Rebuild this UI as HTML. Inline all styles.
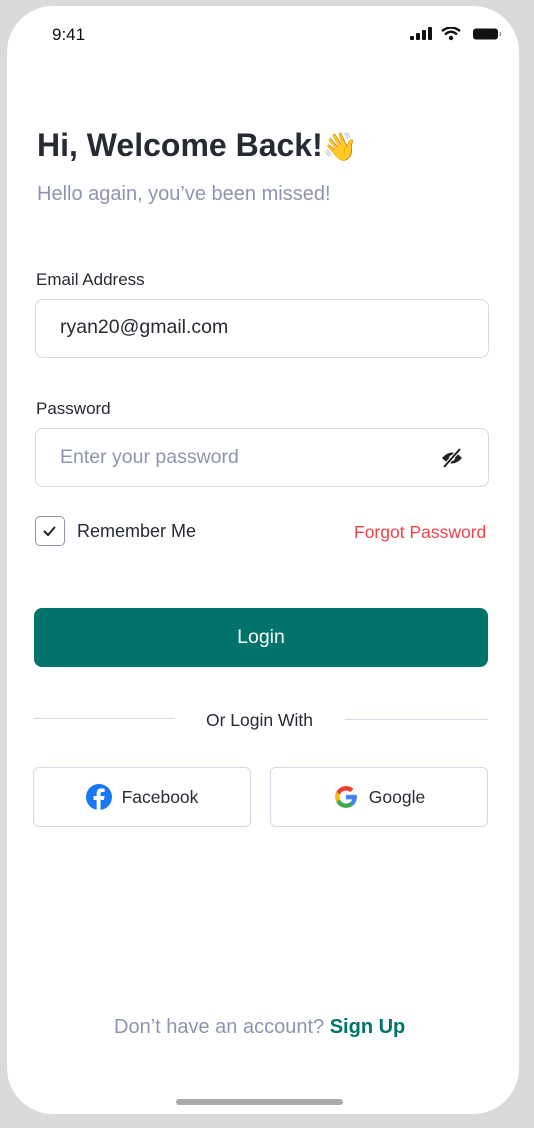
<!DOCTYPE html>
<html><head><meta charset="utf-8"><style>
*{margin:0;padding:0;box-sizing:border-box}
body{width:534px;height:1128px;background:#dadada;font-family:"Liberation Sans",sans-serif;position:relative;overflow:hidden}
.phone{position:absolute;left:7px;top:6px;width:512px;height:1108px;background:#fff;border-radius:46px}
.a{position:absolute}
.input{position:absolute;left:35px;width:454px;height:59px;border:1.5px solid #d6d8e6;border-radius:8px}
.btn{position:absolute;top:767px;height:60px;border:1.5px solid #d6d8e6;border-radius:6px;font-size:17.5px;color:#2a2e35;display:flex;align-items:center;justify-content:center;gap:10px}
</style></head><body>
<div class="phone"></div>
<div class="a" style="left:52px;top:25px;font-size:17px;color:#111">9:41</div>
<svg class="a" style="left:410px;top:27px" width="94" height="15">
<rect x="0" y="9" width="4" height="4" rx="1" fill="#111"/><rect x="6" y="6" width="4" height="7" rx="1" fill="#111"/><rect x="12" y="3" width="4" height="10" rx="1" fill="#111"/><rect x="18" y="0" width="4" height="13" rx="1" fill="#111"/>
<path d="M32 4 Q41 -3 50 4" stroke="#111" stroke-width="2.4" fill="none"/><path d="M35 7.5 Q41 2 47 7.5" stroke="#111" stroke-width="2.4" fill="none"/><circle cx="41" cy="11" r="2.2" fill="#111"/>
<rect x="63" y="1.5" width="25" height="11" rx="3" fill="#111"/><rect x="89.5" y="5" width="1.5" height="4" fill="#999"/>
</svg>
<div class="a" style="left:37px;top:127px;font-size:32px;font-weight:bold;color:#262a33">Hi, Welcome Back!<span style="font-size:28px">👋</span></div>
<div class="a" style="left:37px;top:183px;font-size:20px;color:#8e95ae">Hello again, you’ve been missed!</div>
<div class="a" style="left:36px;top:270px;font-size:17px;color:#262a33">Email Address</div>
<div class="input" style="top:299px"></div>
<div class="a" style="left:60px;top:316px;font-size:19.5px;color:#262a33">ryan20@gmail.com</div>
<div class="a" style="left:36px;top:399px;font-size:17px;color:#262a33">Password</div>
<div class="input" style="top:428px"></div>
<div class="a" style="left:60px;top:446px;font-size:19.5px;color:#8e95ae">Enter your password</div>
<svg class="a" style="left:440px;top:447px" width="24" height="22" viewBox="0 0 24 22"><path d="M2 11 Q12 0 22 11 Q12 22 2 11Z" fill="#222"/><circle cx="12" cy="11" r="3" fill="#fff"/><path d="M4 20 L20 2" stroke="#fff" stroke-width="4"/><path d="M4 20 L20 2" stroke="#222" stroke-width="2"/></svg>
<div class="a" style="left:35px;top:516px;width:30px;height:30px;border:1.5px solid #8e93a8;border-radius:5px"></div>
<svg class="a" style="left:42px;top:524px" width="16" height="14"><path d="M2 7 L6 11 L13 3" stroke="#222" stroke-width="2" fill="none"/></svg>
<div class="a" style="left:77px;top:521px;font-size:18px;color:#262a33">Remember Me</div>
<div class="a" style="left:354px;top:522px;font-size:17.5px;color:#f2424a">Forgot Password</div>
<div class="a" style="left:34px;top:608px;width:454px;height:59px;background:#00736b;border-radius:8px;color:#fff;font-size:19.5px;display:flex;align-items:center;justify-content:center">Login</div>
<div class="a" style="left:34px;top:718px;width:141px;height:1px;background:#d6d8e6"></div>
<div class="a" style="left:345px;top:719px;width:143px;height:1px;background:#d6d8e6"></div>
<div class="a" style="left:206px;top:710px;font-size:17.5px;color:#262a33">Or Login With</div>
<div class="btn" style="left:33px;width:218px"><svg width="26" height="26" viewBox="0 0 26 26"><circle cx="13" cy="13" r="13" fill="#1877f2"/><path d="M14.5 26 V16 H18 L18.5 12 H14.5 V9.8 Q14.5 8 16.3 8 H18.6 V4.6 Q17 4.4 15.4 4.4 Q10.6 4.4 10.6 9.3 V12 H7.5 V16 H10.6 V26Z" fill="#fff"/></svg>Facebook</div>
<div class="btn" style="left:270px;width:218px"><svg width="26" height="26" viewBox="0 0 48 48"><path d="M43.6 20H24v8.4h11.3C34.3 33 29.8 36 24 36c-6.6 0-12-5.4-12-12s5.4-12 12-12c3 0 5.8 1.1 7.9 3l5.9-5.9C34 5.6 29.3 4 24 4 13 4 4 13 4 24s9 20 20 20 20-9 20-20c0-1.3-.1-2.7-.4-4z" fill="#fbbc05"/><path d="M6.3 14.7l6.6 4.8C14.7 15.1 19 12 24 12c3 0 5.8 1.1 7.9 3l5.9-5.9C34 5.6 29.3 4 24 4 16.3 4 9.7 8.3 6.3 14.7z" fill="#ea4335"/><path d="M24 44c5.2 0 9.9-1.7 13.6-4.8l-6.3-5.3C29.2 35.3 26.7 36 24 36c-5.8 0-10.3-3-11.3-7.9l-6.5 5C9.5 39.6 16.2 44 24 44z" fill="#34a853"/><path d="M43.6 20H24v8.4h11.3c-.5 2.4-2 4.4-4 5.8l6.3 5.3C41.4 36 44 30.6 44 24c0-1.3-.1-2.7-.4-4z" fill="#4285f4"/></svg>Google</div>
<div class="a" style="left:114px;top:1016px;font-size:20px;color:#8e95ae">Don’t have an account? <span style="color:#00736b;font-weight:bold">Sign Up</span></div>
<div class="a" style="left:176px;top:1099px;width:167px;height:6px;border-radius:3px;background:#aaa"></div>
</body></html>
